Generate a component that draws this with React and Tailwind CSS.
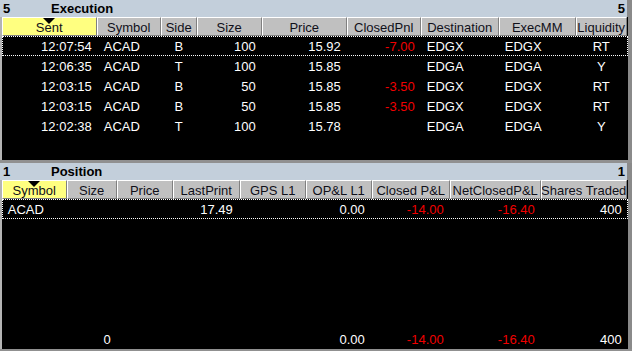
const FONT = { fontFamily: '"Liberation Sans", Arial, sans-serif' };

const execCols = [
  { label: 'Sent', w: 'w-[95px]', align: 'justify-end pr-[5px]', sorted: true },
  { label: 'Symbol', w: 'w-[64px]', align: 'justify-start pl-[7px]' },
  { label: 'Side', w: 'w-[36px]', align: 'justify-center' },
  { label: 'Size', w: 'w-[65px]', align: 'justify-end pr-[6px]' },
  { label: 'Price', w: 'w-[85px]', align: 'justify-end pr-[6px]' },
  { label: 'ClosedPnl', w: 'w-[74px]', align: 'justify-end pr-[6px]' },
  { label: 'Destination', w: 'w-[78px]', align: 'justify-start pl-[6px]' },
  { label: 'ExecMM', w: 'w-[77px]', align: 'justify-start pl-[6px]' },
  { label: 'Liquidity', w: 'w-[51px]', align: 'justify-center' },
];

const execRows = [
  ['12:07:54', 'ACAD', 'B', '100', '15.92', '-7.00', 'EDGX', 'EDGX', 'RT'],
  ['12:06:35', 'ACAD', 'T', '100', '15.85', '', 'EDGA', 'EDGA', 'Y'],
  ['12:03:15', 'ACAD', 'B', '50', '15.85', '-3.50', 'EDGX', 'EDGX', 'RT'],
  ['12:03:15', 'ACAD', 'B', '50', '15.85', '-3.50', 'EDGX', 'EDGX', 'RT'],
  ['12:02:38', 'ACAD', 'T', '100', '15.78', '', 'EDGA', 'EDGA', 'Y'],
];

const posCols = [
  { label: 'Symbol', w: 'w-[65px]', align: 'justify-start pl-[6px]', sorted: true },
  { label: 'Size', w: 'w-[50px]', align: 'justify-end pr-[6px]' },
  { label: 'Price', w: 'w-[56px]', align: 'justify-end pr-[6px]' },
  { label: 'LastPrint', w: 'w-[67px]', align: 'justify-end pr-[7px]' },
  { label: 'GPS L1', w: 'w-[66px]', align: 'justify-end pr-[6px]' },
  { label: 'OP&L L1', w: 'w-[66px]', align: 'justify-end pr-[7px]' },
  { label: 'Closed P&L', w: 'w-[78px]', align: 'justify-end pr-[6px]' },
  { label: 'NetClosedP&L', w: 'w-[91px]', align: 'justify-end pr-[6px]' },
  { label: 'Shares Traded', w: 'w-[86px]', align: 'justify-end pr-[5px]' },
];

const posRow = ['ACAD', '', '', '17.49', '', '0.00', '-14.00', '-16.40', '400'];
const posTotal = ['', '0', '', '', '', '0.00', '-14.00', '-16.40', '400'];

function TitleBar({ count, title }) {
  return (
    <div className="flex h-[17px] items-center bg-[#c3cfdb] text-[13px] font-bold leading-none text-black">
      <span className="w-[51px] pl-[3px]">{count}</span>
      <span className="flex-1">{title}</span>
      <span className="pr-[2px]">{count}</span>
    </div>
  );
}

function HeaderRow({ cols }) {
  return (
    <div className="flex h-[19px]">
      {cols.map((c) => (
        <div
          key={c.label}
          className={`${c.w} relative flex shrink-0 items-center justify-center overflow-hidden whitespace-nowrap border-l border-t border-l-white border-t-white border-r border-b border-r-[#808080] border-b-[#808080] pt-px text-[13px] leading-none text-[#10101a] ${
            c.sorted ? 'bg-[#ffff80]' : 'bg-[#c0c0c0]'
          }`}
        >
          {c.sorted && (
            <span className="absolute left-1/2 top-0 h-0 w-0 -translate-x-1/2 border-l-[6px] border-r-[6px] border-t-[6px] border-l-transparent border-r-transparent border-t-black" />
          )}
          {c.label}
        </div>
      ))}
    </div>
  );
}

function DataRow({ cols, cells, focused }) {
  return (
    <div
      className={`flex h-[20px] ${
        focused ? 'border border-dotted border-white' : 'border border-transparent'
      }`}
    >
      {cols.map((c, i) => {
        const v = cells[i];
        const red = v.startsWith('-');
        return (
          <div
            key={c.label}
            className={`${c.w} flex shrink-0 items-center whitespace-nowrap text-[13px] leading-none ${c.align} ${
              red ? 'text-[#f00000]' : 'text-white'
            } ${i === 0 ? '-ml-px' : ''}`}
          >
            {v}
          </div>
        );
      })}
    </div>
  );
}

function Panel({ count, title, height, children }) {
  return (
    <div className={`flex ${height} flex-col`}>
      <div className="flex">
        <div className="flex-1">
          <TitleBar count={count} title={title} />
        </div>
        <div className="w-[5px] bg-[#8a8a8a]" />
      </div>
      <div className="flex flex-1">
        <div className="w-[2px] bg-[#b4b4b4]" />
        <div className="flex flex-1 flex-col bg-black">{children}</div>
        <div className="w-[5px] bg-[#8a8a8a]" />
      </div>
    </div>
  );
}

export default function App() {
  return (
    <div className="flex h-[351px] w-[632px] flex-col bg-[#909090]" style={FONT}>
      <Panel count="5" title="Execution" height="h-[160px]">
        <HeaderRow cols={execCols} />
        {execRows.map((r, i) => (
          <DataRow key={i} cols={execCols} cells={r} focused={i === 0} />
        ))}
      </Panel>
      <div className="h-[3px]" />
      <Panel count="1" title="Position" height="h-[186px]">
        <HeaderRow cols={posCols} />
        <DataRow cols={posCols} cells={posRow} focused />
        <div className="flex-1" />
        <DataRow cols={posCols} cells={posTotal} />
      </Panel>
    </div>
  );
}
